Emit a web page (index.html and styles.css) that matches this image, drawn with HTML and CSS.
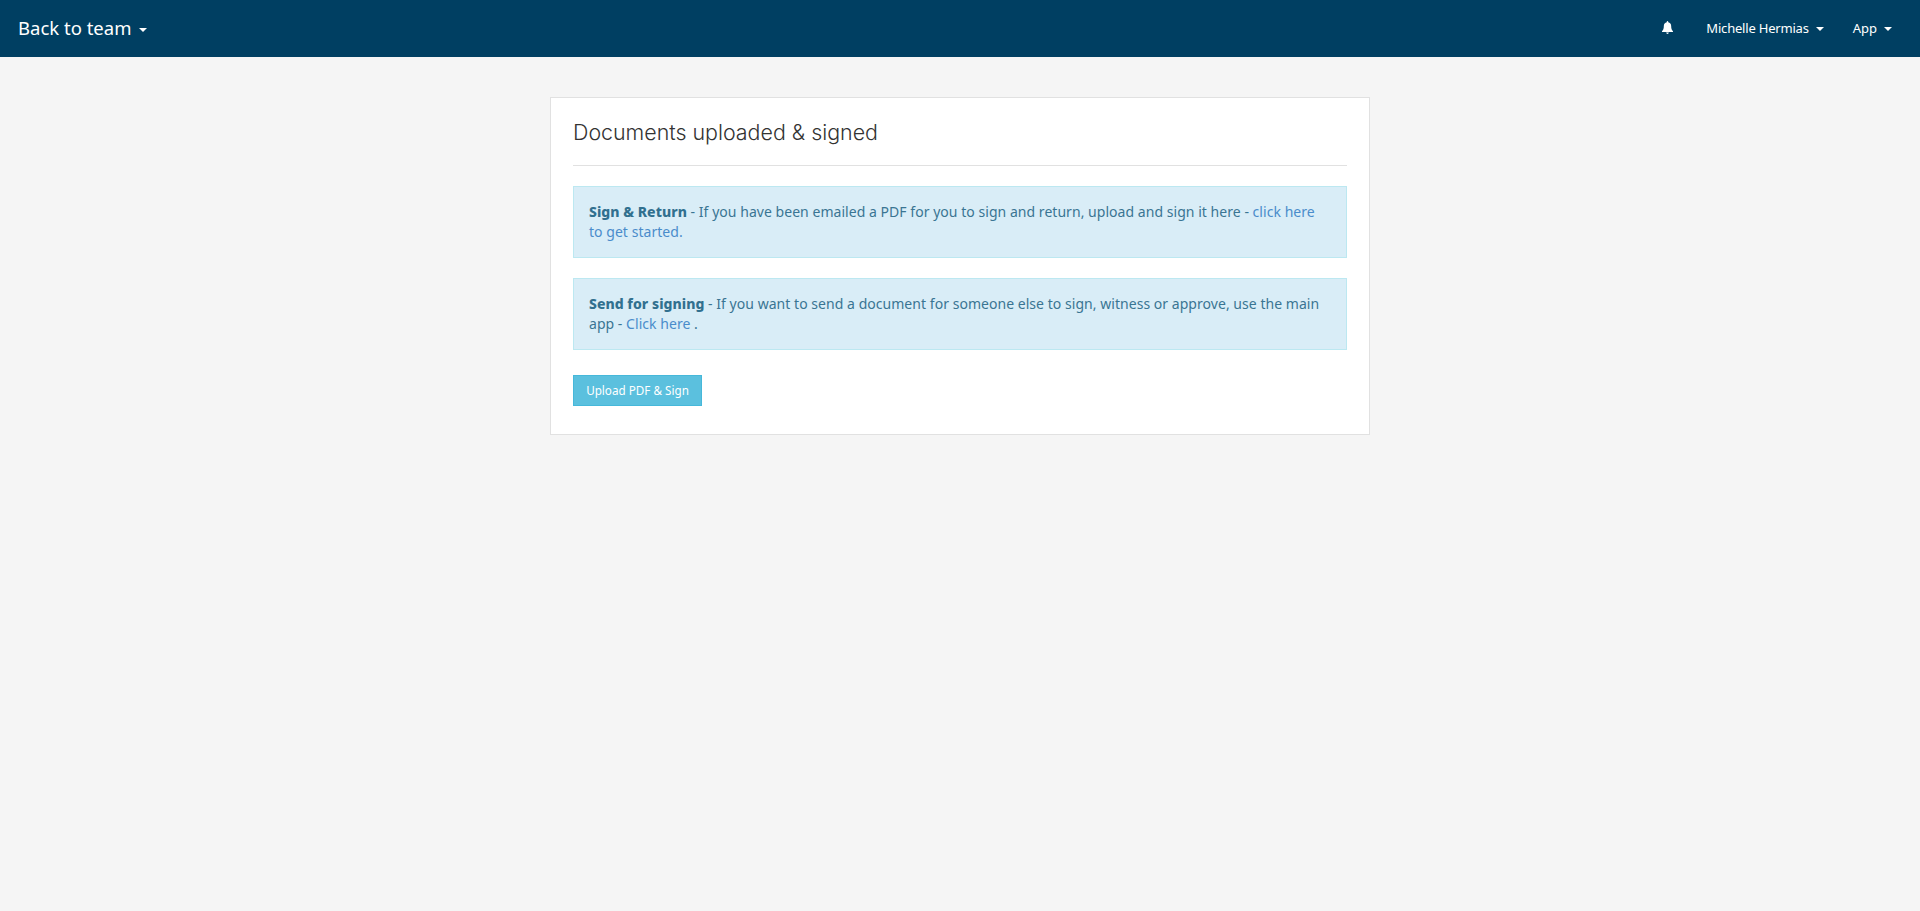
FILE: index.html
```html
<!DOCTYPE html>
<html lang="en">
<head>
<meta charset="utf-8">
<title>Documents uploaded &amp; signed</title>
<link rel="stylesheet" href="styles.css">
</head>
<body>
<nav class="navbar">
  <a class="brand">Back to team<span class="caret caret-brand"></span></a>
  <div class="nav-right">
    <a class="nav-bell" aria-label="Notifications">
      <svg width="11" height="13" viewBox="0 0 12 14"><path fill="#fff" d="M6 0c-.5 0-.8.3-.8.8v.5C3.300 1.700 2 3.300 2 5.300c0 3.200-.7 4.300-2 5.700v.8h12V11c-1.300-1.400-2-2.500-2-5.700 0-2-1.300-3.600-3.200-4v-.5C6.800.3 6.500 0 6 0zM4.600 12.500c0 .8.600 1.500 1.400 1.500s1.400-.7 1.400-1.500z"/></svg>
    </a>
    <a class="nav-link nav-name">Michelle Hermias<span class="caret"></span></a>
    <a class="nav-link">App<span class="caret"></span></a>
  </div>
</nav>
<main class="page">
  <section class="card">
    <h1 class="title">Documents uploaded &amp; signed</h1>
    <hr class="rule">
    <p class="alert"><strong>Sign &amp; Return</strong> - If you have been emailed a PDF for you to sign and return, upload and sign it here - <a class="link">click here to get started.</a></p>
    <p class="alert"><strong>Send for signing</strong> - If you want to send a document for someone else to sign, witness or approve, use the main app - <a class="link">Click here</a> .</p>
    <button class="btn" type="button">Upload PDF &amp; Sign</button>
  </section>
</main>
</body>
</html>
```
FILE: styles.css
```css
* { box-sizing: border-box; }
html, body { margin: 0; padding: 0; }
body {
  min-height: 911px;
  background: #f5f5f5;
  font-family: "Noto Sans", "Open Sans", sans-serif;
  font-size: 14px;
  color: #333;
}
.navbar {
  height: 57px;
  background: #003f62;
  display: flex;
  align-items: center;
  justify-content: space-between;
  padding: 0 28px 2px 18px;
  color: #fff;
}
.brand { font-size: 18.5px; line-height: 55px; }
.nav-right { display: flex; align-items: center; }
.nav-bell { display: flex; margin-right: 33px; }
.nav-link { font-size: 13px; }
.nav-name { letter-spacing: -0.2px; }
.nav-link + .nav-link { margin-left: 29px; }
.caret {
  display: inline-block;
  width: 0; height: 0;
  margin-left: 7px;
  vertical-align: middle;
  border-top: 4px solid #fff;
  border-left: 4px solid transparent;
  border-right: 4px solid transparent;
}
.caret-brand { margin-left: 8px; }
.page { display: flex; justify-content: center; padding-top: 40px; }
.card {
  width: 820px;
  height: 338px;
  background: #fff;
  border: 1px solid #e1e1e1;
  padding: 20px 22px;
}
.title {
  margin: 0;
  font-family: Inter, "Noto Sans", sans-serif;
  font-size: 21.4px;
  font-weight: 300;
  line-height: 28px;
  color: #333;
}
.rule { margin: 19px 0 20px; border: 0; border-top: 1px solid #e1e1e1; }
.alert {
  margin: 0 0 20px;
  height: 72px;
  padding: 15px;
  font-size: 14px;
  line-height: 20px;
  letter-spacing: 0.04px;
  background: #d9edf7;
  border: 1px solid #bce8f1;
  color: #3a7593;
}
.alert strong { font-weight: 800; color: #31708f; }
.link { color: #4a8ccb; }
.btn {
  display: block;
  margin-top: 25px;
  width: 129px;
  height: 31px;
  padding: 0 0 1px;
  font-family: inherit;
  font-size: 11.7px;
  color: #fff;
  background: #5bc0de;
  border: 1px solid #46b8da;
}
```
